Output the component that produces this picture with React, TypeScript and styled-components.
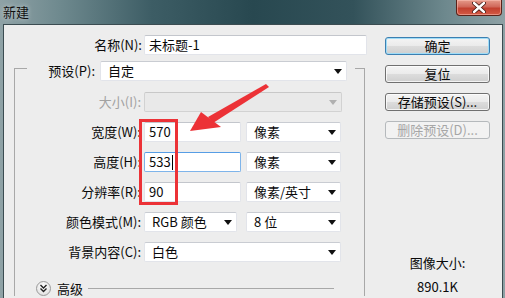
import React from 'react';
import styled, { createGlobalStyle, css } from 'styled-components';

const GlobalStyle = createGlobalStyle`
  html, body {
    margin: 0;
    padding: 0;
    background: #ededed;
  }
  body {
    font-family: "Noto Sans CJK SC", "Noto Sans", sans-serif;
    font-size: 13px;
    color: #0a0a0a;
  }
  * { box-sizing: border-box; }
`;

const Window = styled.div`
  position: relative;
  width: 505px;
  height: 298px;
  overflow: hidden;
  display: flex;
  flex-direction: column;
  background: linear-gradient(90deg, #8fa2a6 0%, #6e898e 12%, #3d5d65 30%, #284850 50%, #33525a 70%, #6d888d 88%, #8ea1a5 100%);
`;

const TitleBar = styled.div`
  height: 24px;
  flex: none;
  display: flex;
  align-items: flex-start;
  justify-content: space-between;
  padding: 0 3px;
`;

const Title = styled.span`
  margin-top: 4px;
  font-size: 13px;
  line-height: 16px;
  color: #111;
  text-shadow: 0 0 5px rgba(255, 255, 255, 0.6);
`;

const CloseButton = styled.div`
  width: 46px;
  height: 16px;
  display: flex;
  align-items: center;
  justify-content: center;
  border: 1px solid #5a2219;
  border-top: none;
  border-radius: 0 0 4px 4px;
  background: linear-gradient(#e59a8a 0%, #d0685a 45%, #c2402f 55%, #d45a45 100%);
  box-shadow: inset 0 0 0 1px rgba(255, 200, 190, 0.5);
`;

const Frame = styled.div`
  flex: 1;
  display: flex;
  padding: 0 2px 0 3px;
`;

const Body = styled.div`
  flex: 1;
  display: flex;
  border: 1px solid #3b4c51;
  border-bottom: none;
  background: #ededed;
  padding: 10px 0 0 10px;
`;

const LeftCol = styled.div`
  width: 353px;
  display: flex;
  flex-direction: column;
`;

const RightCol = styled.div`
  width: 105px;
  margin-left: 18px;
  padding-top: 2px;
  display: flex;
  flex-direction: column;
  gap: 10px;
`;

const Row = styled.div`
  display: flex;
  align-items: center;
  height: 20px;
`;

const Label = styled.span<{ $w: number; $gap?: number; $disabled?: boolean }>`
  width: ${p => p.$w}px;
  margin-right: ${p => p.$gap ?? 3}px;
  text-align: right;
  white-space: nowrap;
  line-height: 20px;
  color: ${p => (p.$disabled ? '#a2a2a2' : '#0a0a0a')};
`;

const TextBox = styled.div<{ $w: number; $focused?: boolean }>`
  position: relative;
  width: ${p => p.$w}px;
  height: 20px;
  display: flex;
  align-items: center;
  padding-left: 4px;
  background: #fff;
  border: 1px solid #e2e4ea;
  border-top-color: #c3c6cc;
  border-radius: 2px;
  line-height: 18px;
  ${p =>
    p.$focused &&
    css`
      border-color: #7eb4ea;
      border-top-color: #569de5;
    `}
`;

const Caret = styled.span`
  width: 1px;
  height: 15px;
  margin-left: 1px;
  background: #000;
`;

const Select = styled.div<{ $w: number; $disabled?: boolean; $gap?: number }>`
  width: ${p => p.$w}px;
  height: 20px;
  margin-left: ${p => p.$gap ?? 0}px;
  display: flex;
  align-items: center;
  justify-content: space-between;
  padding: 0 4px 0 7px;
  background: ${p => (p.$disabled ? '#e9e9e9' : '#fff')};
  border: 1px solid ${p => (p.$disabled ? '#d2d2d2' : '#e2e4ea')};
  border-top-color: ${p => (p.$disabled ? '#c8c8c8' : '#c9ccd2')};
  border-radius: 2px;
  line-height: 18px;
`;

const Arrow = styled.span<{ $disabled?: boolean }>`
  width: 0;
  height: 0;
  border-left: 4px solid transparent;
  border-right: 4px solid transparent;
  border-top: 5px solid ${p => (p.$disabled ? '#b0b0b0' : '#111')};
`;

const GroupBox = styled.fieldset`
  width: 351px;
  margin: 6px 0 0 0;
  padding: 0;
  min-width: 0;
  border: 1px solid #a8a8a8;
  border-bottom: none;
`;

const GroupTitle = styled.legend`
  height: 15px;
  margin-left: 12px;
  padding: 0 8px 0 0;
  display: flex;
  align-items: flex-start;
  overflow: visible;
`;

const GroupRows = styled.div`
  padding-top: 16px;
  display: flex;
  flex-direction: column;
  gap: 10px;
`;

const AdvancedRow = styled.div`
  margin-top: 19px;
  padding-left: 21px;
  height: 15px;
  display: flex;
  align-items: center;
`;

const ExpandIcon = styled.span`
  width: 15px;
  height: 15px;
  flex: none;
  border-radius: 50%;
  border: 1px solid #9a9a9a;
  background: radial-gradient(circle at 50% 35%, #ffffff 0%, #e6e6e6 70%, #cfcfcf 100%);
  display: flex;
  align-items: center;
  justify-content: center;
`;

const AdvancedText = styled.span`
  margin-left: 6px;
  line-height: 15px;
`;

const Rule = styled.span`
  width: 246px;
  height: 1px;
  margin-left: 5px;
  background: #a8a8a8;
`;

const Button = styled.button<{ $primary?: boolean }>`
  width: 105px;
  height: 18px;
  padding: 0;
  font: inherit;
  font-size: 13px;
  line-height: 16px;
  color: #0a0a0a;
  border: 1px solid #707070;
  border-radius: 3px;
  background: linear-gradient(#f4f4f4 0%, #ebebeb 48%, #dcdcdc 52%, #cfcfcf 100%);
  box-shadow: inset 0 0 0 1px rgba(255, 255, 255, 0.75);
  ${p =>
    p.$primary &&
    css`
      border-color: #3c7fb1;
      box-shadow: inset 0 0 0 1px #9fdcf7;
    `}
  &:disabled {
    color: #a6a6a6;
    border-color: #b5b9bc;
    background: #f2f2f2;
    box-shadow: none;
  }
`;

const SizeInfo = styled.div`
  margin-top: 106px;
  display: flex;
  flex-direction: column;
  align-items: center;
  gap: 8px;
  line-height: 16px;
`;

const Annotation = styled.svg`
  position: absolute;
  left: 0;
  top: 0;
  pointer-events: none;
`;

export default function App() {
  return (
    <>
      <GlobalStyle />
      <Window>
        <TitleBar>
          <Title>新建</Title>
          <CloseButton>
            <svg width="14" height="11" viewBox="0 0 14 11">
              <path d="M2 1 L12 10 M12 1 L2 10" stroke="#3a120c" strokeWidth="4" strokeLinecap="round" />
              <path d="M2 1 L12 10 M12 1 L2 10" stroke="#fff" strokeWidth="2.4" strokeLinecap="round" />
            </svg>
          </CloseButton>
        </TitleBar>
        <Frame>
          <Body>
            <LeftCol>
              <Row>
                <Label $w={128} $gap={2}>名称(N):</Label>
                <TextBox $w={223}>未标题-1</TextBox>
              </Row>
              <GroupBox>
                <GroupTitle>
                  <Label $w={68} $gap={5}>预设(P):</Label>
                  <Select $w={247}>
                    <span>自定</span>
                    <Arrow />
                  </Select>
                </GroupTitle>
                <GroupRows>
                  <Row>
                    <Label $w={126} $disabled>大小(I):</Label>
                    <Select $w={198} $disabled>
                      <span />
                      <Arrow $disabled />
                    </Select>
                  </Row>
                  <Row>
                    <Label $w={126}>宽度(W):</Label>
                    <TextBox $w={97}>570</TextBox>
                    <Select $w={95} $gap={5}>
                      <span>像素</span>
                      <Arrow />
                    </Select>
                  </Row>
                  <Row>
                    <Label $w={126}>高度(H):</Label>
                    <TextBox $w={97} $focused>
                      533
                      <Caret />
                    </TextBox>
                    <Select $w={95} $gap={5}>
                      <span>像素</span>
                      <Arrow />
                    </Select>
                  </Row>
                  <Row>
                    <Label $w={126}>分辨率(R):</Label>
                    <TextBox $w={97}>90</TextBox>
                    <Select $w={95} $gap={5}>
                      <span>像素/英寸</span>
                      <Arrow />
                    </Select>
                  </Row>
                  <Row>
                    <Label $w={126}>颜色模式(M):</Label>
                    <Select $w={93}>
                      <span>RGB 颜色</span>
                      <Arrow />
                    </Select>
                    <Select $w={95} $gap={9}>
                      <span>8 位</span>
                      <Arrow />
                    </Select>
                  </Row>
                  <Row>
                    <Label $w={126}>背景内容(C):</Label>
                    <Select $w={197}>
                      <span>白色</span>
                      <Arrow />
                    </Select>
                  </Row>
                </GroupRows>
                <AdvancedRow>
                  <ExpandIcon>
                    <svg width="9" height="9" viewBox="0 0 9 9">
                      <path d="M1.5 1 L4.5 4 L7.5 1 M1.5 4.5 L4.5 7.5 L7.5 4.5" fill="none" stroke="#222" strokeWidth="1.4" />
                    </svg>
                  </ExpandIcon>
                  <AdvancedText>高级</AdvancedText>
                  <Rule />
                </AdvancedRow>
              </GroupBox>
            </LeftCol>
            <RightCol>
              <Button $primary>确定</Button>
              <Button>复位</Button>
              <Button>存储预设(S)...</Button>
              <Button disabled>删除预设(D)...</Button>
              <SizeInfo>
                <span>图像大小:</span>
                <span>890.1K</span>
              </SizeInfo>
            </RightCol>
          </Body>
        </Frame>
        <Annotation width="505" height="298" viewBox="0 0 505 298">
          <rect x="140.5" y="120.5" width="36" height="83" fill="none" stroke="#ec3237" strokeWidth="3" />
          <polygon points="266,84 269,87 213,123 208,117" fill="#ec3237" />
          <polygon points="190,131 201,112 221,127" fill="#ec3237" />
        </Annotation>
      </Window>
    </>
  );
}
